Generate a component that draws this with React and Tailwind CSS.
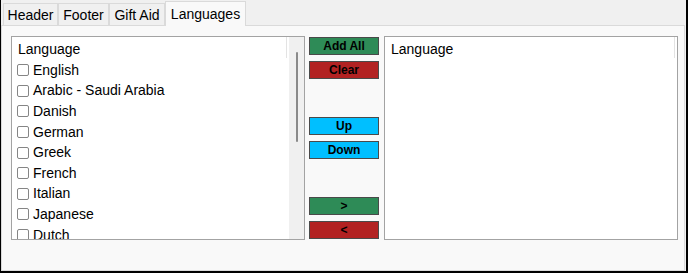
import React from "react";

const languages = [
  "English",
  "Arabic - Saudi Arabia",
  "Danish",
  "German",
  "Greek",
  "French",
  "Italian",
  "Japanese",
  "Dutch",
  "Spanish",
];

const tabs = [
  { name: "Header", w: "w-[55px]" },
  { name: "Footer", w: "w-[51px]" },
  { name: "Gift Aid", w: "w-[56px]" },
];

const ActionButton = ({ label, color, className = "" }) => (
  <button
    className={`block h-[18px] w-full shrink-0 border border-[#4a4a4a] text-[12px] font-bold leading-none text-black ${color} ${className}`}
  >
    {label}
  </button>
);

const ListBox = ({ items, scroll }) => (
  <div className="flex h-[204px] w-[294px] shrink-0 border border-[#a3a3a3] bg-white">
    <div className="relative flex-1 overflow-hidden pt-[2px]">
      <div className="flex h-[21px] items-center pl-[6px] text-[14px] text-black">
        Language
      </div>
      <div className="absolute right-[2px] top-0 h-[21px] w-px bg-[#e3e3e3]" />
      {items.map((item) => (
        <div key={item} className="flex h-[20.6px] items-center pl-[5px] text-[14px] text-black">
          <span className="mr-[4px] h-[12px] w-[12px] rounded-[2px] border border-[#858585] bg-white" />
          {item}
        </div>
      ))}
    </div>
    {scroll && (
      <div className="flex w-[15px] justify-center bg-[#f0f0f0] pt-[15px]">
        <div className="h-[90px] w-[2px] rounded-full bg-[#8a8a8a]" />
      </div>
    )}
  </div>
);

export default function App() {
  return (
    <div
      className="flex h-[273px] w-[688px] flex-col border-b-2 border-l border-r-2 border-black bg-[#f0f0f0]"
      style={{ fontFamily: '"Liberation Sans", Arial, sans-serif' }}
    >
      <div className="flex h-[25px] shrink-0 items-end pl-[2px]">
        {tabs.map((t) => (
          <div
            key={t.name}
            className={`flex h-[22px] items-center justify-center border border-b-0 border-[#dadada] bg-[#f0f0f0] pt-[2px] text-[14px] text-black ${t.w}`}
          >
            {t.name}
          </div>
        ))}
        <div className="relative z-10 -mb-px flex h-[25px] w-[81px] items-center justify-center border border-b-0 border-[#dadada] bg-[#f9f9f9] text-[14px] text-black">
          Languages
        </div>
      </div>
      <div className="mr-px flex flex-1 border border-[#dadada] bg-[#f9f9f9] pl-[9px] pt-[10px]">
        <ListBox items={languages} scroll />
        <div className="ml-[4px] flex h-[204px] w-[70px] shrink-0 flex-col pt-px">
          <ActionButton label="Add All" color="bg-[#2e8b57]" />
          <ActionButton label="Clear" color="bg-[#b22222]" className="mt-[6px]" />
          <ActionButton label="Up" color="bg-[#00bfff]" className="mt-[38px]" />
          <ActionButton label="Down" color="bg-[#00bfff]" className="mt-[6px]" />
          <ActionButton label=">" color="bg-[#2e8b57]" className="mt-[38px]" />
          <ActionButton label="<" color="bg-[#b22222]" className="mt-[6px]" />
        </div>
        <div className="ml-[5px]">
          <ListBox items={[]} />
        </div>
      </div>
    </div>
  );
}
